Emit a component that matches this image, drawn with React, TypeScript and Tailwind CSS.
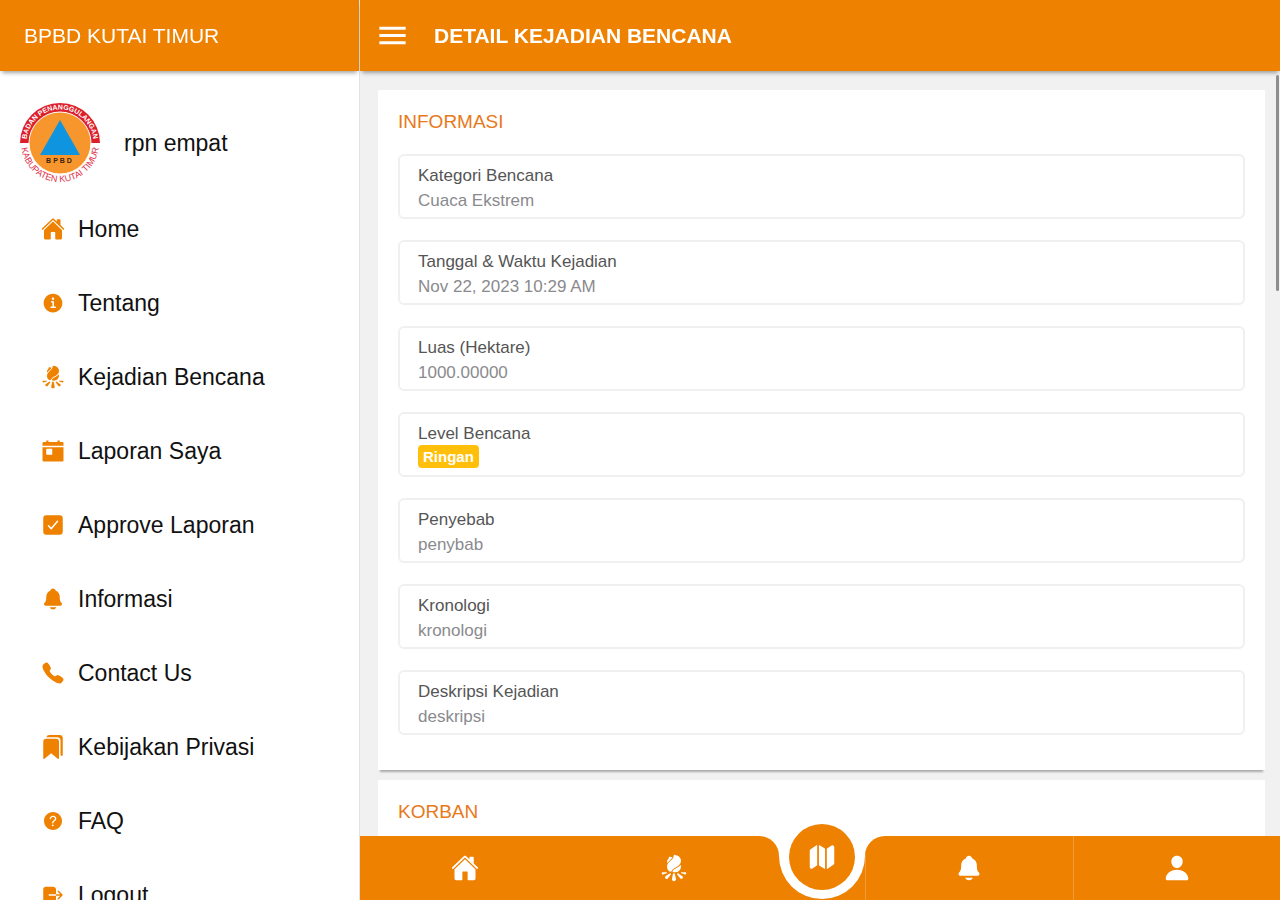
import type { ReactNode } from "react";
import type { IconType } from "react-icons";
import {
  IoHome,
  IoInformationCircle,
  IoBonfire,
  IoTodaySharp,
  IoCheckbox,
  IoNotifications,
  IoCall,
  IoBookmarks,
  IoHelpCircle,
  IoLogOut,
  IoMap,
  IoPerson,
  IoMenuSharp,
} from "react-icons/io5";

const menuItems: { label: string; icon: IconType }[] = [
  { label: "Home", icon: IoHome },
  { label: "Tentang", icon: IoInformationCircle },
  { label: "Kejadian Bencana", icon: IoBonfire },
  { label: "Laporan Saya", icon: IoTodaySharp },
  { label: "Approve Laporan", icon: IoCheckbox },
  { label: "Informasi", icon: IoNotifications },
  { label: "Contact Us", icon: IoCall },
  { label: "Kebijakan Privasi", icon: IoBookmarks },
  { label: "FAQ", icon: IoHelpCircle },
  { label: "Logout", icon: IoLogOut },
];

const details: { label: string; value: string; badge?: boolean }[] = [
  { label: "Kategori Bencana", value: "Cuaca Ekstrem" },
  { label: "Tanggal & Waktu Kejadian", value: "Nov 22, 2023 10:29 AM" },
  { label: "Luas (Hektare)", value: "1000.00000" },
  { label: "Level Bencana", value: "Ringan", badge: true },
  { label: "Penyebab", value: "penybab" },
  { label: "Kronologi", value: "kronologi" },
  { label: "Deskripsi Kejadian", value: "deskripsi" },
];

function Logo() {
  return (
    <svg viewBox="0 0 82 82" className="size-[82px] shrink-0" role="img" aria-label="BPBD Kutai Timur">
      <defs>
        <path id="ring-top" d="M7.5 41 A33.5 33.5 0 0 1 74.5 41" />
        <path id="ring-bottom" d="M2 41 A39 39 0 0 0 80 41" />
      </defs>
      <path d="M1 41 A40 40 0 0 1 81 41 Z" fill="#dc1f2b" />
      <circle cx="41" cy="41" r="31" fill="#f7962c" stroke="#fff" strokeWidth="1" />
      <path d="M41 18 L61 53 H21 Z" fill="#0f95e0" />
      <text x="41" y="61" textAnchor="middle" fontSize="7" fontWeight="700" letterSpacing="2" fill="#3b2410">
        BPBD
      </text>
      <text fontSize="7" fontWeight="700" fill="#fff">
        <textPath href="#ring-top" startOffset="50%" textAnchor="middle">
          BADAN PENANGGULANGAN
        </textPath>
      </text>
      <text fontSize="9" fill="#e0304a">
        <textPath href="#ring-bottom" startOffset="50%" textAnchor="middle">
          KABUPATEN KUTAI TIMUR
        </textPath>
      </text>
    </svg>
  );
}

function Sidebar() {
  return (
    <aside className="flex w-[360px] shrink-0 flex-col border-r border-[#e3e3e3] bg-white">
      <header className="z-10 flex h-[71px] shrink-0 items-center bg-[#ee8100] px-6 text-[21px] text-white shadow-[0_4px_4px_-2px_rgba(0,0,0,0.35)]">
        BPBD KUTAI TIMUR
      </header>
      <div className="min-h-0 flex-1 overflow-y-auto [scrollbar-width:none]">
        <div className="flex items-center gap-[23px] px-[19px] pt-[31px] pb-2">
          <Logo />
          <span className="text-[23px]">rpn empat</span>
        </div>
        <nav>
          {menuItems.map(({ label, icon: Icon }) => (
            <a key={label} href="#" className="flex h-[74px] items-center gap-[13px] px-[41px] text-[23px]">
              <Icon className="size-6 shrink-0 text-[#ee8100]" />
              {label}
            </a>
          ))}
        </nav>
      </div>
    </aside>
  );
}

function Card({ title, children }: { title: string; children?: ReactNode }) {
  return (
    <section className="bg-white px-5 pt-5 pb-[35px] shadow-[0_4px_2px_-2px_rgba(0,0,0,0.3)]">
      <h2 className="text-[19px] leading-6 text-[#e8791a]">{title}</h2>
      {children}
    </section>
  );
}

function TabButton({ label, icon: Icon, className = "" }: { label: string; icon: IconType; className?: string }) {
  return (
    <button type="button" aria-label={label} className={`flex flex-1 items-center justify-center ${className}`}>
      <Icon className="size-7" />
    </button>
  );
}

function TabBar() {
  return (
    <footer className="relative flex h-16 shrink-0 bg-white text-white">
      <div className="flex flex-[101] rounded-tr-[20px] bg-[#ee8100]">
        <TabButton label="Home" icon={IoHome} />
        <TabButton label="Kejadian Bencana" icon={IoBonfire} />
      </div>
      <div className="relative w-[86px] shrink-0">
        {/* notch under the round map button */}
        <svg viewBox="0 0 86 64" className="h-16 w-[86px]" aria-hidden="true">
          <path d="M0 20 A43 43 0 0 0 86 20 V64 H0 Z" fill="#ee8100" />
        </svg>
        <button
          type="button"
          aria-label="Peta"
          className="absolute -top-3 left-[10px] flex size-[66px] items-center justify-center rounded-full bg-[#ee8100]"
        >
          <IoMap className="size-7" />
        </button>
      </div>
      <div className="flex flex-[100] overflow-hidden rounded-tl-[20px] bg-[#ee8100]">
        <TabButton label="Informasi" icon={IoNotifications} className="border-l border-[#f39a3a]" />
        <TabButton label="Profil" icon={IoPerson} className="border-l border-[#f39a3a]" />
      </div>
    </footer>
  );
}

export default function App() {
  return (
    <div className="flex h-screen overflow-hidden bg-white font-['Liberation_Sans',Arial,sans-serif] text-[#111]">
      <Sidebar />
      <div className="flex min-w-0 flex-1 flex-col">
        <header className="z-10 flex h-[71px] shrink-0 items-center gap-6 bg-[#ee8100] px-[15px] text-white shadow-[0_4px_4px_-2px_rgba(0,0,0,0.35)]">
          <button type="button" aria-label="Menu">
            <IoMenuSharp className="size-[35px]" />
          </button>
          <h1 className="text-[21px] font-bold">DETAIL KEJADIAN BENCANA</h1>
        </header>

        <div className="relative flex min-h-0 flex-1">
          <main className="flex flex-1 flex-col gap-[10px] overflow-y-auto bg-[#f1f1f1] pt-[19px] pr-[15px] pl-[18px] [scrollbar-width:none]">
            <Card title="INFORMASI">
              <dl className="mt-5 flex flex-col gap-[21px]">
                {details.map((item) => (
                  <div key={item.label} className="h-[65px] rounded-md border-2 border-[#f0f0f0] px-[18px] pt-[7px] text-[17px]">
                    <dt className="leading-[25px] text-[#555]">{item.label}</dt>
                    {item.badge ? (
                      <dd className="-mt-px w-fit rounded bg-[#ffbf0a] px-[5px] text-[15px] leading-[23px] font-bold text-white">
                        {item.value}
                      </dd>
                    ) : (
                      <dd className="leading-[25px] text-[#8a8a8e]">{item.value}</dd>
                    )}
                  </div>
                ))}
              </dl>
            </Card>
            <Card title="KORBAN" />
          </main>
          <div className="absolute top-1 right-px h-[216px] w-[3px] rounded-full bg-[#8e8e8e]" />
        </div>

        <TabBar />
      </div>
    </div>
  );
}
